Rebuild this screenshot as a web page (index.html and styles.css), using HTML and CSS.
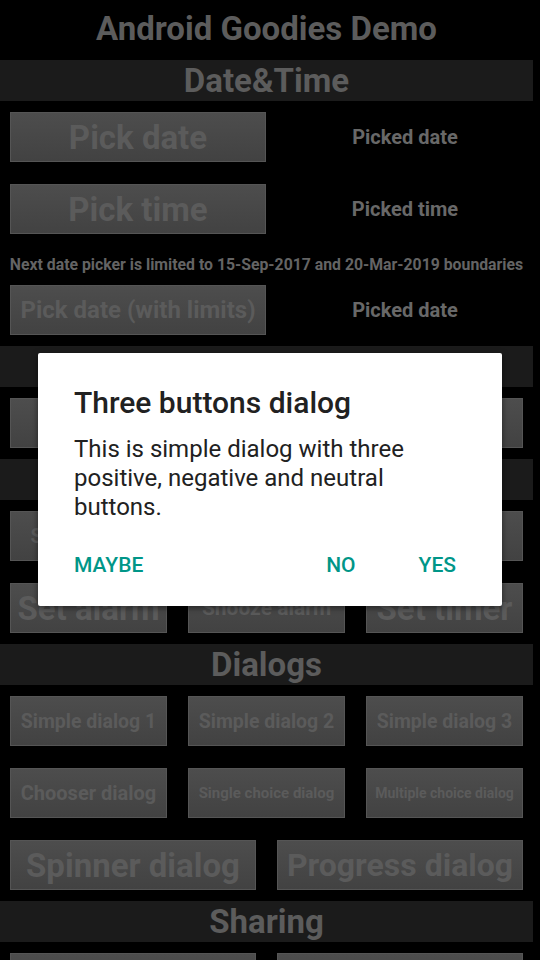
FILE: index.html
```html
<!DOCTYPE html>
<html>
<head>
<meta charset="utf-8">
<link rel="stylesheet" href="styles.css">
</head>
<body>
<div class="screen">
  <div class="app">
    <div class="title">Android Goodies Demo</div>

    <div class="band">Date&amp;Time</div>
    <div class="row">
      <div class="btn btn-date f33">Pick date</div>
      <div class="picked">Picked date</div>
    </div>
    <div class="row">
      <div class="btn btn-date f33">Pick time</div>
      <div class="picked">Picked time</div>
    </div>
    <div class="note">Next date picker is limited to 15-Sep-2017 and 20-Mar-2019 boundaries</div>
    <div class="row">
      <div class="btn btn-date f24">Pick date (with limits)</div>
      <div class="picked">Picked date</div>
    </div>

    <div class="band">Notifications</div>
    <div class="row">
      <div class="btn f20">Show notification</div>
      <div class="btn f20">Cancel</div>
    </div>

    <div class="band">Alarms</div>
    <div class="row">
      <div class="btn f20">Show alarms</div>
      <div class="btn f20">Dismiss alarm</div>
      <div class="btn f20">Show timers</div>
    </div>
    <div class="row">
      <div class="btn f33">Set alarm</div>
      <div class="btn f21">Snooze alarm</div>
      <div class="btn f33">Set timer</div>
    </div>

    <div class="band">Dialogs</div>
    <div class="row">
      <div class="btn f195">Simple dialog 1</div>
      <div class="btn f195">Simple dialog 2</div>
      <div class="btn f195">Simple dialog 3</div>
    </div>
    <div class="row">
      <div class="btn f20">Chooser dialog</div>
      <div class="btn f15">Single choice dialog</div>
      <div class="btn f14">Multiple choice dialog</div>
    </div>
    <div class="row">
      <div class="btn f33">Spinner dialog</div>
      <div class="btn f32">Progress dialog</div>
    </div>

    <div class="band">Sharing</div>
    <div class="row">
      <div class="btn f30">Share text</div>
      <div class="btn f30">Share image</div>
    </div>
  </div>

  <div class="dialog">
    <div class="dlg-title">Three buttons dialog</div>
    <div class="dlg-msg">This is simple dialog with three positive, negative and neutral buttons.</div>
    <div class="dlg-actions">
      <span class="dlg-btn">MAYBE</span>
      <span class="dlg-spacer"></span>
      <span class="dlg-btn">NO</span>
      <span class="dlg-btn dlg-yes">YES</span>
    </div>
  </div>
</div>
</body>
</html>
```

FILE: styles.css
```css
html, body {
  margin: 0;
  padding: 0;
  background: #000;
}

.screen {
  position: relative;
  width: 540px;
  height: 960px;
  overflow: hidden;
  background: #000;
  font-family: Roboto, "Noto Sans", sans-serif;
}

.app {
  width: 533px;
  display: flex;
  flex-direction: column;
}

.title {
  height: 60px;
  line-height: 58px;
  text-align: center;
  font-size: 33px;
  font-weight: 700;
  color: #5c5c5c;
}

.band {
  height: 41px;
  line-height: 41px;
  background: #1b1b1b;
  text-align: center;
  font-size: 33px;
  font-weight: 700;
  color: #5c5c5c;
  overflow: hidden;
}

.row {
  display: flex;
  gap: 21px;
  padding: 11px 10px;
  height: 50px;
}

.btn {
  flex: 1;
  box-sizing: border-box;
  height: 50px;
  border: 1px solid #555;
  background: linear-gradient(#4d4d4d, #424242);
  color: #5b5b5b;
  font-weight: 700;
  display: flex;
  align-items: center;
  justify-content: center;
  white-space: nowrap;
  overflow: hidden;
}

.btn-date {
  flex: 0 0 256px;
}

.picked {
  flex: 1;
  display: flex;
  align-items: center;
  justify-content: center;
  font-size: 20px;
  font-weight: 700;
  color: #686868;
}

.note {
  height: 29px;
  box-sizing: border-box;
  padding-top: 11px;
  line-height: 18px;
  text-align: center;
  font-size: 15.8px;
  font-weight: 700;
  color: #646464;
  white-space: nowrap;
}

.f33 { font-size: 33px; }
.f32 { font-size: 32px; }
.f30 { font-size: 30px; }
.f24 { font-size: 24px; }
.f21 { font-size: 21px; }
.f20 { font-size: 20px; }
.f195 { font-size: 19.5px; }
.f15 { font-size: 15px; }
.f14 { font-size: 14px; }

.dialog {
  position: absolute;
  left: 38px;
  top: 353px;
  width: 464px;
  height: 253px;
  box-sizing: border-box;
  background: #fff;
  border-radius: 2px;
  padding: 33px 46px 0 36px;
  box-shadow: 0 2px 6px rgba(0, 0, 0, 0.5);
}

.dlg-title {
  font-size: 30px;
  line-height: 34px;
  font-weight: 500;
  color: #212121;
}

.dlg-msg {
  margin-top: 15px;
  font-size: 24px;
  line-height: 29px;
  color: #212121;
}

.dlg-actions {
  display: flex;
  margin-top: 33px;
  line-height: 20px;
}

.dlg-btn {
  font-size: 21px;
  font-weight: 500;
  color: #009688;
}

.dlg-spacer {
  flex: 1;
}

.dlg-yes {
  margin-left: 63px;
}
```
